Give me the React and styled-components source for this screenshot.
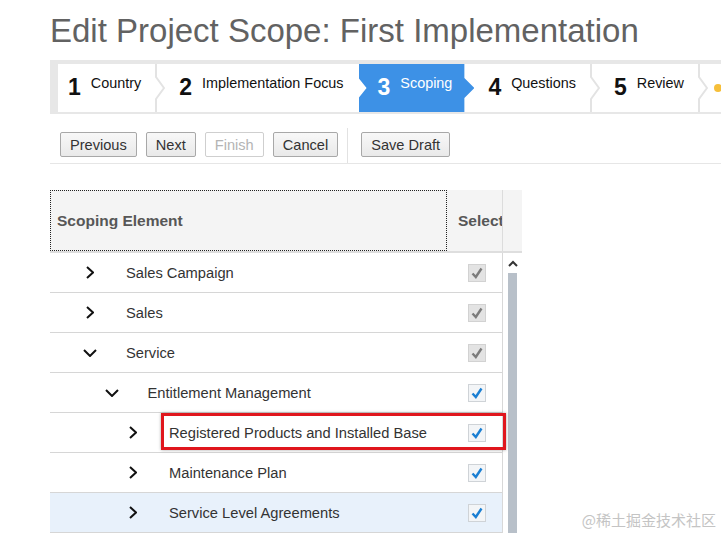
import React from "react";
import styled, { createGlobalStyle } from "styled-components";

const GlobalStyle = createGlobalStyle`
  html, body {
    margin: 0;
    padding: 0;
    background: #fff;
  }
  body {
    font-family: "Liberation Sans", Arial, sans-serif;
    overflow: hidden;
  }
`;

const steps = [
  { n: 1, label: "Country" },
  { n: 2, label: "Implementation Focus" },
  { n: 3, label: "Scoping", active: true },
  { n: 4, label: "Questions" },
  { n: 5, label: "Review" },
];

const rows = [
  { name: "Sales Campaign", level: 0, open: false, locked: true },
  { name: "Sales", level: 0, open: false, locked: true },
  { name: "Service", level: 0, open: true, locked: true },
  { name: "Entitlement Management", level: 1, open: true },
  { name: "Registered Products and Installed Base", level: 2, open: false },
  { name: "Maintenance Plan", level: 2, open: false },
  { name: "Service Level Agreements", level: 2, open: false, selected: true },
];

const Chevron = ({ open }) =>
  open ? (
    <svg width="14" height="8" viewBox="0 0 14 8">
      <path d="M1 1 L7 7 L13 1" fill="none" stroke="#111" strokeWidth="2" />
    </svg>
  ) : (
    <svg width="8" height="13" viewBox="0 0 8 13">
      <path d="M1 1 L7 6.5 L1 12" fill="none" stroke="#111" strokeWidth="2" />
    </svg>
  );

const StepDivider = () => (
  <Divider width="10" height="48" viewBox="0 0 10 48">
    <path d="M1 0 V13 L9 24 L1 35 V48" fill="none" stroke="#e3e3e3" strokeWidth="2" />
  </Divider>
);

const App = () => {
  return (
    <Page>
      <GlobalStyle />
      <Title>Edit Project Scope: First Implementation</Title>

      <StepFrame>
        <StepTrack>
          {steps.map((s, i) => {
            const next = steps[i + 1];
            const divider = !s.active && next && !next.active;
            return (
              <React.Fragment key={s.n}>
                <Step $active={s.active} $first={i === 0}>
                  <StepNum>{s.n}</StepNum>
                  <StepLabel>{s.label}</StepLabel>
                </Step>
                {divider && <StepDivider />}
              </React.Fragment>
            );
          })}
          <StepDivider />
          <Step $tail>
            <WarnDot />
          </Step>
        </StepTrack>
      </StepFrame>

      <Toolbar>
        <Button>Previous</Button>
        <Button>Next</Button>
        <Button disabled>Finish</Button>
        <Button>Cancel</Button>
        <ToolSep />
        <Button>Save Draft</Button>
      </Toolbar>

      <Table>
        <HeadRow>
          <ElementHead>Scoping Element</ElementHead>
          <SelectHead>Select</SelectHead>
          <ScrollHead />
        </HeadRow>
        <Body>
          <Rows>
            {rows.map((r) => (
              <Row key={r.name} $selected={r.selected}>
                <NameCell $level={r.level}>
                  <Toggle>
                    <Chevron open={r.open} />
                  </Toggle>
                  <Name>{r.name}</Name>
                </NameCell>
                <CheckCell>
                  <Checkbox $locked={r.locked}>
                    <svg width="16" height="16" viewBox="0 0 16 16">
                      <path
                        d="M3.5 8.5 L6.8 12 L12.5 3.5"
                        fill="none"
                        stroke={r.locked ? "#7b7b7b" : "#1b7fd3"}
                        strokeWidth="2.4"
                      />
                    </svg>
                  </Checkbox>
                </CheckCell>
              </Row>
            ))}
          </Rows>
          <ScrollCol>
            <svg width="10" height="7" viewBox="0 0 10 7">
              <path d="M1 6 L5 2 L9 6" fill="none" stroke="#333" strokeWidth="2" />
            </svg>
            <Thumb />
          </ScrollCol>
          <Highlight />
        </Body>
      </Table>

      <Watermark>@稀土掘金技术社区</Watermark>
    </Page>
  );
};

export default App;

const Page = styled.div`
  position: relative;
  height: 533px;
  padding-left: 50px;
  box-sizing: border-box;
  overflow: hidden;
`;

const Title = styled.h1`
  margin: 0;
  padding-top: 11px;
  font-size: 33px;
  line-height: 40px;
  font-weight: normal;
  color: #626262;
  white-space: nowrap;
`;

const StepFrame = styled.div`
  margin-top: 9px;
  padding: 4px 0 2px 8px;
  background: #e7e7e7;
  overflow: hidden;
`;

const StepTrack = styled.div`
  display: flex;
  height: 48px;
  background: #fff;
  white-space: nowrap;
`;

const Step = styled.div`
  display: flex;
  align-items: flex-start;
  gap: 10px;
  flex-shrink: 0;
  padding: 11px 14px 0 ${(p) => (p.$first ? "10px" : p.$tail ? "6px" : "14px")};
  color: ${(p) => (p.$active ? "#fff" : "#111")};
  ${(p) =>
    p.$active &&
    `
    background: #3d91e6;
    padding: 11px 22px 0 19px;
    margin-left: 1px;
    clip-path: polygon(0 0, calc(100% - 10px) 0, calc(100% - 10px) 14px, 100% 24px, calc(100% - 10px) 34px, calc(100% - 10px) 100%, 0 100%, 0 34px, 8px 24px, 0 14px);
  `}
`;

const StepNum = styled.span`
  font-size: 23px;
  line-height: 23px;
  font-weight: bold;
  margin-top: 1px;
`;

const StepLabel = styled.span`
  font-size: 14.4px;
  line-height: 16px;
`;

const Divider = styled.svg`
  flex-shrink: 0;
  display: block;
`;

const WarnDot = styled.span`
  width: 8px;
  height: 8px;
  margin-top: 9px;
  border-radius: 50%;
  background: #f6bf3a;
`;

const Toolbar = styled.div`
  display: flex;
  align-items: flex-start;
  gap: 9px;
  height: 36px;
  box-sizing: border-box;
  margin-top: 14px;
  padding: 4px 0 0 10px;
  border-bottom: 1px solid #e6e6e6;
`;

const Button = styled.button`
  height: 25px;
  padding: 0 9px;
  font-family: "Liberation Sans", Arial, sans-serif;
  font-size: 14.6px;
  color: #333;
  background: linear-gradient(#f8f8f8, #e9e9e9);
  border: 1px solid #a8a8a8;
  border-radius: 2px;

  &:disabled {
    color: #b4b4b4;
    background: #fff;
    border-color: #cfcfcf;
  }
`;

const ToolSep = styled.span`
  align-self: stretch;
  width: 1px;
  margin: -4px 4px 0 0;
  background: #e2e2e2;
`;

const Table = styled.div`
  width: 472px;
  margin-top: 26px;
`;

const HeadRow = styled.div`
  display: flex;
  height: 63px;
  box-sizing: border-box;
  background: #f4f4f4;
  border-bottom: 2px solid #dedede;
`;

const ElementHead = styled.div`
  display: flex;
  align-items: center;
  width: 397px;
  box-sizing: border-box;
  padding-left: 6px;
  border: 1px dotted #222;
  font-size: 15.5px;
  font-weight: bold;
  color: #575757;
`;

const SelectHead = styled.div`
  display: flex;
  align-items: center;
  width: 56px;
  box-sizing: border-box;
  padding-left: 11px;
  border-right: 1px solid #dcdcdc;
  overflow: hidden;
  white-space: nowrap;
  font-size: 15.5px;
  font-weight: bold;
  color: #575757;
`;

const ScrollHead = styled.div`
  flex: 1;
`;

const Body = styled.div`
  position: relative;
  display: flex;
`;

const Rows = styled.div`
  width: 453px;
  box-sizing: border-box;
  border-right: 1px solid #d8d8d8;
`;

const Row = styled.div`
  display: flex;
  align-items: center;
  height: 40px;
  box-sizing: border-box;
  border-bottom: 1px solid #d6d6d6;
  background: ${(p) => (p.$selected ? "#e8f1fb" : "#fff")};
`;

const NameCell = styled.div`
  display: flex;
  align-items: center;
  flex: 1;
  padding-left: ${(p) => 30 + p.$level * 21.5}px;
`;

const Toggle = styled.span`
  display: flex;
  justify-content: center;
  align-items: center;
  width: 20px;
`;

const Name = styled.span`
  margin-left: 26px;
  font-size: 14.7px;
  color: #333;
  white-space: nowrap;
`;

const CheckCell = styled.div`
  width: 55px;
  padding-left: 21px;
  box-sizing: border-box;
`;

const Checkbox = styled.span`
  display: flex;
  justify-content: center;
  align-items: center;
  width: 18px;
  height: 18px;
  box-sizing: border-box;
  border: 1px solid ${(p) => (p.$locked ? "#d2d2d2" : "#cfd3d7")};
  background: ${(p) => (p.$locked ? "#e3e3e3" : "#f3f5f7")};
`;

const ScrollCol = styled.div`
  display: flex;
  flex-direction: column;
  flex: 1;
  padding: 7px 0 0 5px;
`;

const Thumb = styled.div`
  flex: 1;
  width: 9px;
  margin-top: 6px;
  background: #b8c0c9;
`;

const Highlight = styled.div`
  position: absolute;
  left: 111px;
  top: 160px;
  width: 345px;
  height: 37px;
  box-sizing: border-box;
  border: 3px solid #e0161d;
  box-shadow: 0 0 3px rgba(0, 0, 0, 0.35);
`;

const Watermark = styled.div`
  position: absolute;
  right: 5px;
  top: 509px;
  font-family: "Noto Sans CJK SC", sans-serif;
  font-size: 15px;
  color: #c4c4c4;
`;
